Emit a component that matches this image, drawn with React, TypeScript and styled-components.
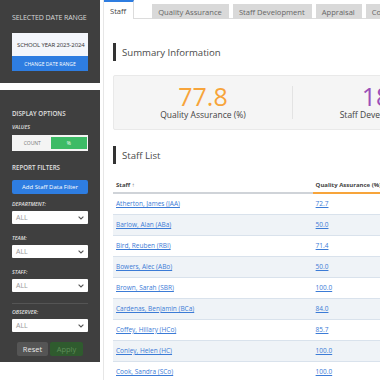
import React from 'react';
import styled, {createGlobalStyle} from "styled-components";

const GlobalStyle = createGlobalStyle`
  html, body {
    margin: 0;
    padding: 0;
    background: #ffffff;
    font-family: "Open Sans", "Liberation Sans", sans-serif;
  }
  * {
    box-sizing: border-box;
  }
`

type RowType = {
    name: string
    qa: string
}

const rows: Array<RowType> = [
    {name: "Atherton, James (JAA)", qa: "72.7"},
    {name: "Barlow, Alan (ABa)", qa: "50.0"},
    {name: "Bird, Reuben (RBI)", qa: "71.4"},
    {name: "Bowers, Alec (ABo)", qa: "50.0"},
    {name: "Brown, Sarah (SBR)", qa: "100.0"},
    {name: "Cardenas, Benjamin (BCa)", qa: "84.0"},
    {name: "Coffey, Hillary (HCo)", qa: "85.7"},
    {name: "Conley, Helen (HC)", qa: "100.0"},
    {name: "Cook, Sandra (SCo)", qa: "100.0"},
]

const filters = ["DEPARTMENT:", "TEAM:", "STAFF:"]

const Chevron = () => (
    <svg width="6" height="4" viewBox="0 0 6 4">
        <path d="M0.6 0.6 L3 3 L5.4 0.6" fill="none" stroke="#555" strokeWidth="1.1"/>
    </svg>
)

const FilterSelect = (props: { label: string }) => (
    <FilterBlock>
        <FilterLabel>{props.label}</FilterLabel>
        <Select>
            <span>ALL</span>
            <Chevron/>
        </Select>
    </FilterBlock>
)

export default function App() {
    return (
        <Page>
            <GlobalStyle/>
            <Sidebar>
                <Panel>
                    <PanelTitle>SELECTED DATE RANGE</PanelTitle>
                    <DateBox>SCHOOL YEAR 2023-2024</DateBox>
                    <ChangeButton>CHANGE DATE RANGE</ChangeButton>
                </Panel>
                <Panel tall>
                    <SectionTitle>DISPLAY OPTIONS</SectionTitle>
                    <SmallLabel>VALUES</SmallLabel>
                    <Toggle>
                        <ToggleOption>COUNT</ToggleOption>
                        <ToggleOption active>%</ToggleOption>
                    </Toggle>
                    <SectionTitle>REPORT FILTERS</SectionTitle>
                    <AddFilterButton>Add Staff Data Filter</AddFilterButton>
                    {filters.map(f => <FilterSelect key={f} label={f}/>)}
                    <Divider/>
                    <FilterSelect label="OBSERVER:"/>
                    <ButtonRow>
                        <ResetButton>Reset</ResetButton>
                        <ApplyButton>Apply</ApplyButton>
                    </ButtonRow>
                </Panel>
            </Sidebar>

            <Main>
                <Tabs>
                    <Tab active>Staff</Tab>
                    <TabSeparator/>
                    <Tab>Quality Assurance</Tab>
                    <Tab>Staff Development</Tab>
                    <Tab>Appraisal</Tab>
                    <Tab>Communication</Tab>
                </Tabs>

                <Content>
                    <Heading>Summary Information</Heading>
                    <SummaryCard>
                        <SummaryItem width={178}>
                            <BigNumber color="#f7a43a">77.8</BigNumber>
                            <SummaryLabel>Quality Assurance (%)</SummaryLabel>
                        </SummaryItem>
                        <SummaryItem width={188} divider>
                            <BigNumber color="#9b4fb8">18.5</BigNumber>
                            <SummaryLabel>Staff Development (hrs)</SummaryLabel>
                        </SummaryItem>
                    </SummaryCard>

                    <Heading>Staff List</Heading>
                    <Table>
                        <thead>
                        <tr>
                            <Th>Staff <Arrow>&#8593;</Arrow></Th>
                            <Th accent>Quality Assurance (%)</Th>
                        </tr>
                        </thead>
                        <tbody>
                        {rows.map((r, i) => (
                            <Tr key={r.name} striped={i % 2 === 1}>
                                <Td><Link>{r.name}</Link></Td>
                                <Td><Link>{r.qa}</Link></Td>
                            </Tr>
                        ))}
                        </tbody>
                    </Table>
                </Content>
            </Main>
        </Page>
    );
}

type PanelPropsType = { tall?: boolean }
type ActivePropsType = { active?: boolean }
type SummaryItemPropsType = { divider?: boolean, width: number }
type AccentPropsType = { accent?: boolean }
type StripedPropsType = { striped?: boolean }

const Page = styled.div`
  display: flex;
  width: 380px;
  height: 380px;
  overflow: hidden;
`
const Sidebar = styled.div`
  width: 100px;
  flex-shrink: 0;
  display: flex;
  flex-direction: column;
  gap: 7px;
`
const Panel = styled.div<PanelPropsType>`
  background: #3f3f3f;
  padding: ${p => p.tall ? "19px 12px 6px" : "13px 12px 11px"};
  display: flex;
  flex-direction: column;
  height: ${p => p.tall ? "272px" : "83px"};
`
const PanelTitle = styled.div`
  color: #d8d8d8;
  font-size: 7px;
  margin-bottom: 11px;
  letter-spacing: -0.1px;
`
const DateBox = styled.div`
  background: #f4f6fb;
  color: #333;
  font-size: 6px;
  height: 23px;
  display: flex;
  align-items: center;
  padding-left: 5px;
  letter-spacing: -0.15px;
`
const ChangeButton = styled.div`
  background: #2e7de1;
  color: #fff;
  font-size: 5px;
  height: 15px;
  display: flex;
  align-items: center;
  justify-content: center;
`
const SectionTitle = styled.div`
  color: #e0e0e0;
  font-size: 6.2px;
  font-weight: 600;
  margin-bottom: 5px;
`
const SmallLabel = styled.div`
  color: #e0e0e0;
  font-size: 5.3px;
  font-weight: 600;
  font-style: italic;
  margin-bottom: 4px;
`
const Toggle = styled.div`
  display: flex;
  background: #f4f4f4;
  height: 20px;
  padding: 2px 1px 2px 2px;
  margin-bottom: 12px;
`
const ToggleOption = styled.div<ActivePropsType>`
  flex: 1;
  display: flex;
  align-items: center;
  justify-content: center;
  font-size: 5px;
  color: ${p => p.active ? "#fff" : "#777"};
  background: ${p => p.active ? "#3dbb66" : "transparent"};
`
const AddFilterButton = styled.div`
  background: #2e7de1;
  color: #fff;
  font-size: 6px;
  height: 18px;
  border-radius: 2px;
  display: flex;
  align-items: center;
  justify-content: center;
  margin: 3px 0 6px;
`
const FilterBlock = styled.div`
  display: flex;
  flex-direction: column;
  margin-bottom: 10px;
`
const FilterLabel = styled.div`
  color: #e0e0e0;
  font-size: 5.3px;
  font-weight: 600;
  font-style: italic;
  margin-bottom: 3px;
`
const Select = styled.div`
  background: #fff;
  height: 13px;
  border-radius: 1px;
  display: flex;
  align-items: center;
  justify-content: space-between;
  padding: 0 4px 0 4px;
  color: #9a9a9a;
  font-size: 7px;
`
const Divider = styled.div`
  border-top: 1px solid #555;
  margin: 1px 0 4px;
`
const ButtonRow = styled.div`
  display: flex;
  justify-content: center;
  gap: 2px;
`
const ResetButton = styled.div`
  background: #555555;
  color: #e8e8e8;
  font-size: 7.5px;
  width: 31px;
  height: 14px;
  border-radius: 2px;
  display: flex;
  align-items: center;
  justify-content: center;
`
const ApplyButton = styled(ResetButton)`
  background: #2f5b2e;
  color: #5d8d58;
  width: 33px;
`
const Main = styled.div`
  flex: 1;
  margin-left: 3px;
  border-left: 1px solid #e6e6e6;
  min-width: 0;
  overflow: hidden;
`
const Tabs = styled.div`
  display: flex;
  align-items: flex-end;
  height: 19px;
  border-bottom: 1px solid #dcdcdc;
  white-space: nowrap;
`
const Tab = styled.div<ActivePropsType>`
  flex-shrink: 0;
  height: ${p => p.active ? "19px" : "15px"};
  margin-bottom: -1px;
  padding: ${p => p.active ? "0 7px 0 6px" : "0 7px 0 6px"};
  margin-right: ${p => p.active ? "0" : "4px"};
  display: flex;
  align-items: center;
  font-size: 7.6px;
  color: ${p => p.active ? "#444" : "#666"};
  background: ${p => p.active ? "#fff" : "#d9d9d9"};
  border-top: ${p => p.active ? "2px solid #2e7de1" : "none"};
  border-right: ${p => p.active ? "1px solid #dcdcdc" : "none"};
`
const TabSeparator = styled.div`
  width: 1px;
  height: 13px;
  background: #d8d8d8;
  margin: 0 9px 3px 9px;
`
const Content = styled.div`
  padding: 24px 0 0 9px;
`
const Heading = styled.div`
  border-left: 3px solid #333;
  padding-left: 6px;
  height: 18px;
  display: flex;
  align-items: center;
  font-size: 9.6px;
  color: #4a4a4a;
  margin-bottom: 14px;
`
const SummaryCard = styled.div`
  display: flex;
  width: 380px;
  height: 55px;
  background: #f5f5f5;
  border: 1px solid #e9e9e9;
  border-radius: 2px;
  margin-bottom: 16px;
  padding: 10px 0;
`
const SummaryItem = styled.div<SummaryItemPropsType>`
  width: ${p => p.width}px;
  flex-shrink: 0;
  display: flex;
  flex-direction: column;
  align-items: center;
  justify-content: center;
  border-left: ${p => p.divider ? "1px solid #e3e3e3" : "none"};
`
const BigNumber = styled.div<{ color: string }>`
  font-size: 25px;
  line-height: 22px;
  color: ${p => p.color};
`
const SummaryLabel = styled.div`
  font-size: 8.5px;
  color: #444;
  margin-top: 2px;
  white-space: nowrap;
`
const Table = styled.table`
  width: 320px;
  border-collapse: collapse;
  table-layout: fixed;
`
const Th = styled.th<AccentPropsType>`
  text-align: left;
  font-size: 6px;
  font-weight: 700;
  color: #444;
  height: 15px;
  padding: 0 0 0 3px;
  border-bottom: 2px solid ${p => p.accent ? "#f7a43a" : "#cfd3d8"};
  width: ${p => p.accent ? "120px" : "199px"};
  white-space: nowrap;
  overflow: hidden;
`
const Arrow = styled.span`
  font-size: 6px;
  color: #666;
`
const Tr = styled.tr<StripedPropsType>`
  background: ${p => p.striped ? "#eff3f7" : "#fff"};
  height: 21px;
`
const Td = styled.td`
  padding: 0 0 0 3px;
  border-bottom: 1px solid #d9e2ec;
  font-size: 6.5px;
`
const Link = styled.a`
  color: #3b7bd6;
  text-decoration: underline;
`
